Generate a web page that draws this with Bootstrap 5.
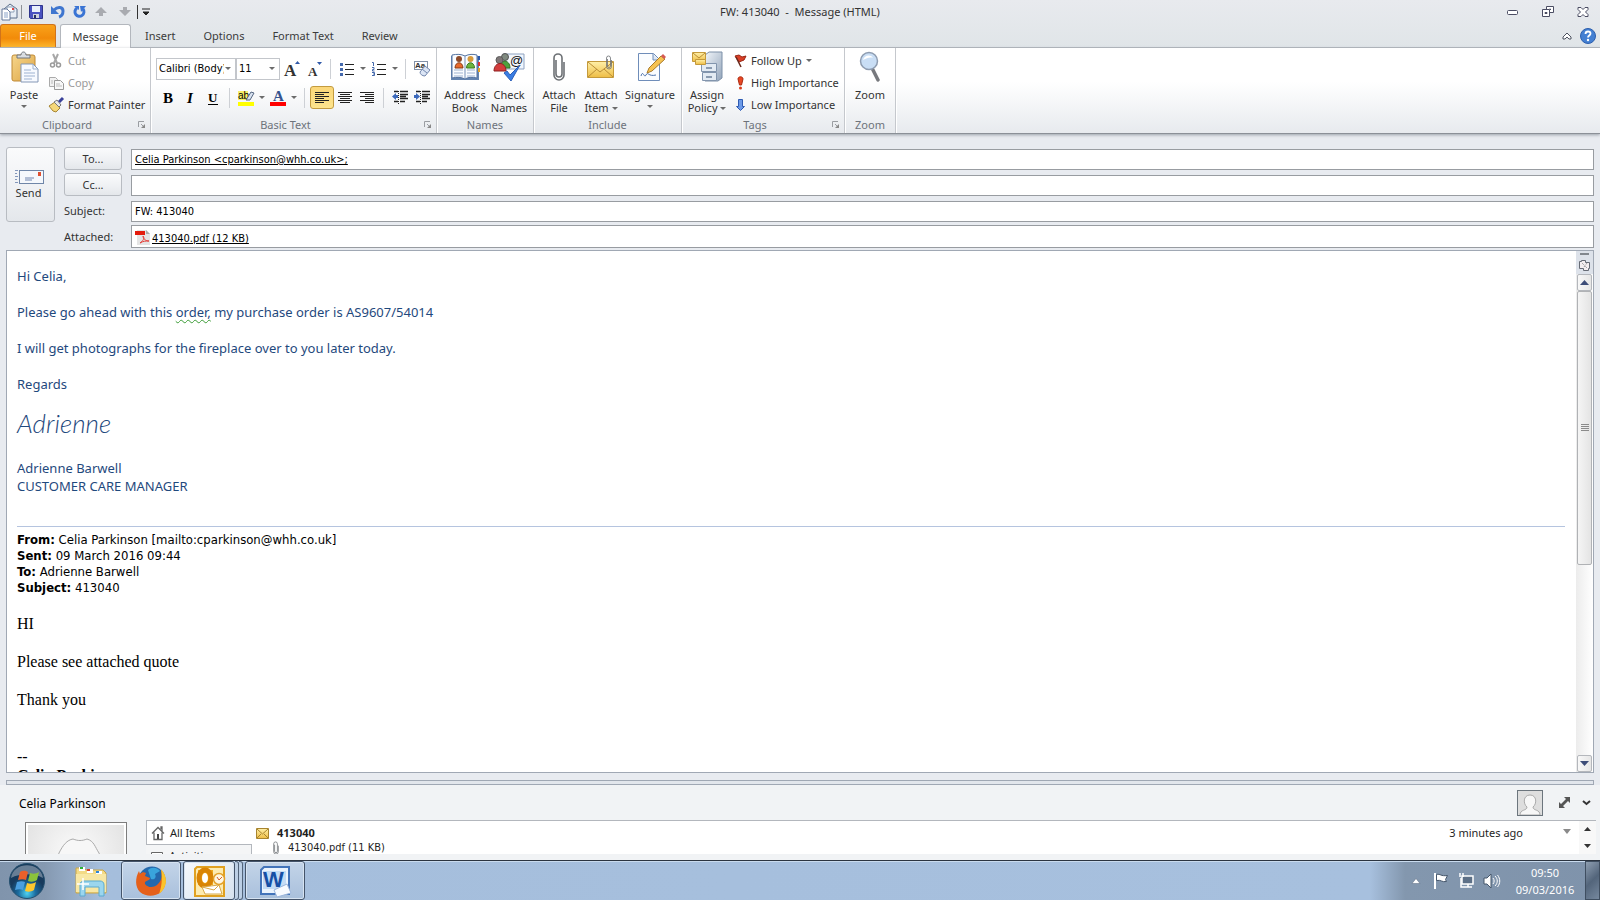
<!DOCTYPE html>
<html lang="en">
<head>
<meta charset="utf-8">
<meta name="viewport" content="width=device-width, initial-scale=1">
<title>FW: 413040 - Message (HTML)</title>
<link href="https://cdn.jsdelivr.net/npm/bootstrap@5.3.0/dist/css/bootstrap.min.css" rel="stylesheet">
<style>
:root{--ui:"Noto Sans","Open Sans",sans-serif;--tahoma:"DejaVu Sans Condensed","DejaVu Sans",sans-serif}
body{font:11px/16px var(--ui);color:#333;background:#e8ebf0}
button,input,select{font:inherit;color:inherit}
svg{display:block;flex:none;overflow:visible}
.tool{background:none;border:0;padding:0;display:flex;align-items:center;justify-content:center;flex:none}
.topbar{background:linear-gradient(#e8eaee,#e0e5e8)}
.titlebar{height:24px}
.titlebar h1{font:11px/16px var(--ui)}
.winbtns{gap:23px;padding-right:11px}
.vsep{width:1px;height:14px;background:#8c9096;flex:none;margin:0 7px 0 3px}
.vsep.dark{background:#333;margin:0 4px 0 6px}
.tabs-row{height:24px;border-bottom:1px solid #b3b7bd}
.tab-item{height:24px;line-height:22px;border:0;background:none;padding:0 14px;text-align:center;color:#3b3b3b}
.tab-file{width:56px;padding:0;color:#fff;border:1px solid #d0731b;border-bottom:0;border-radius:3px 3px 0 0;background:linear-gradient(#f9a21a,#f28b09 60%,#fdb62c);height:23px}
.tab-on{width:71px;padding:0;background:#fff;border:1px solid #b3b7bd;border-bottom:0;border-radius:3px 3px 0 0}
.ribbon{height:86px;background:linear-gradient(#fff,#fff 40%,#e7eaee);border-bottom:1px solid #8b9097;box-shadow:0 1px 3px #9aa0a8}
.rgroup{border-right:1px solid #c5c8cd;box-shadow:1px 0 #fff;flex:none}
.rbody{height:69px}
.trow{padding:9px 0 0 1px}
.trow + .trow{padding-top:6px}
.rlabel{height:16px;line-height:16px;color:#6d737b;text-align:center}
.launch{right:4px;bottom:4px}
.bigtool{flex-direction:column;justify-content:flex-start;line-height:13px;padding-top:3px;height:69px}
.bigtool svg.pic{margin-bottom:5px}
.smalltool{height:22px;justify-content:flex-start;gap:4px;white-space:nowrap}
.dim{color:#9a9a9a}
.fmt{height:22px;background:#fff;border:1px solid #c3c6cb;appearance:none;padding:0 2px;font:11px/20px var(--tahoma);color:#000;border-radius:0}
.fsep{width:1px;height:20px;background:#cdd0d5;margin:0 5px;flex:none}
.w22{width:22px;height:23px}.w10{width:10px;height:23px}.w24{width:24px;height:23px}
.picked{background:linear-gradient(#fbd779,#fde48d);border:1px solid #c39b3f;border-radius:3px}
.fields{padding:13px 6px 2px;display:grid;grid-template-columns:49px 58px 1fr;column-gap:9px;row-gap:3px;grid-auto-rows:23px}
.softbtn{border:1px solid #b8bcc2;border-radius:3px;background:linear-gradient(#fafbfc,#eef0f3 60%,#e4e7eb);padding:0}
.send{grid-row:1/4}
.entry{height:21px;border:1px solid #989ca1;background:#fff;border-radius:0;padding:0 3px;font:11px/19px var(--tahoma);color:#000;align-self:end;width:100%;outline:0}
.editor{border:1px solid #a0a8b4;margin:0 6px;background:#fff;min-height:0}
.letter{padding:16px 11px 0 10px;color:#1f497d;font:13px/18px var(--ui)}
.letter p{margin:0 0 18px}
.letter .script{font:italic 300 26px/24px Lato,cursive;margin-bottom:24px}
.gram{text-decoration:underline wavy #3a9b35 1px;text-underline-offset:2px}
.quoted{border-top:1px solid #b5c4df;padding-top:5px;font:13px/16px var(--tahoma);color:#000;margin-top:31px}
.plain{font:16px/19px "Liberation Serif",serif;color:#000}
.plain p{margin:19px 0 0}
.quoted + .plain{margin-top:-1px}
.sbar{width:17px;background:linear-gradient(90deg,#ececec,#fff)}
.sbtn{width:15px;height:17px;border:1px solid #b4b7bc;border-radius:2px;background:linear-gradient(90deg,#f8f8f8,#e6e6e6);margin:0 1px}
.thumb{flex:0 0 59%;width:15px;margin:0 1px;border:1px solid #b0b2b5;border-radius:2px;background:linear-gradient(90deg,#f5f5f5,#e4e4e4)}
.splitter{height:5px;margin:7px 6px 0;border:1px solid #a0a8b4;background:#e2e6ec}
.people{background:#f1f3f5;height:75px;color:#1e1e1e}
.pphead{height:35px;padding:0 9px 0 19px}
.ppname{font-size:12px;line-height:20px;padding-top:2px;color:#000}
.ppbody{height:34px;overflow:hidden}
.photo{width:102px;height:100px;border:1px solid #7d7d7d;padding:2px;background:#fff;margin:2px 19px 0 25px;flex:none}
.photo svg{background:radial-gradient(circle at 50% 30%,#fbfbfb,#d8d8d8)}
.sidetab{height:25px;width:106px;border:1px solid #b3b7bd;border-width:1px 0 1px 1px;background:#fff;display:flex;align-items:center;padding:0 4px;gap:5px;color:#1e1e1e}
.sidetab.off{height:21px;background:#f4f5f6;border-width:0 1px 0 0}
.feed{background:#fff;border-top:1px solid #b3b7bd;min-width:0}
.taskbar{height:40px;border-top:1px solid #2b3440;box-shadow:inset 0 1px #c9dbee;background:linear-gradient(90deg,#8094ac,#8599b1 45px,#a5bedc 100px,#a7c0de calc(100% - 230px),#8397ae calc(100% - 195px),#7f93ab)}
.explorer{width:57px}
.task{height:39px;width:60px;margin-left:2px;border:1px solid #44546a;border-radius:3px;background:linear-gradient(#c3d4e8,#a9c0dc);box-shadow:inset 0 0 0 1px #d6e3f1}
.active-task{width:52px;background:linear-gradient(135deg,#f6f9fc,#d6e2ef)}
.stack{width:4px;height:39px;border:1px solid #52647a;border-left:0;border-radius:0 3px 3px 0;background:#bccfe5}
.showdesk{width:15px;height:39px;border:1px solid #3f4e60;background:linear-gradient(135deg,#8e9eb1,#53657b 50%,#76889e)}
.clock{color:#fff;line-height:17px;text-align:center;width:64px}
</style>
</head>
<body class="vh-100 overflow-hidden d-flex flex-column">
<svg width="0" height="0" class="position-absolute">
<defs>
<symbol id="dd" viewBox="0 0 6 4"><path d="M0 0h6L3 3z" fill="#6b6b6b"/></symbol>
<symbol id="launch" viewBox="0 0 8 8"><path d="M.5 6V.5H6M3 3l3 3" fill="none" stroke="#9a9da2"/><path d="M7 3v4H3z" fill="#888"/></symbol>
<symbol id="clip" viewBox="0 0 12 30"><path d="M3 8v14a3 3 0 0 0 6 0V6a4 4 0 0 0-8 0v17a5 5 0 0 0 10 0V10" fill="none" stroke="#6d7175" stroke-width="1.6"/></symbol>
<symbol id="bust" viewBox="0 0 24 24"><path d="M2 24c0-6 7-4 7-8-4-3-4-12 3-12s7 9 3 12c0 4 7 2 7 8z" fill="#f7f7f7" stroke="#aaa"/></symbol>
<linearGradient id="gold" x2="0" y2="1"><stop stop-color="#fff0a8"/><stop offset="1" stop-color="#eebd45"/></linearGradient>
<linearGradient id="tan" x2="1" y2="1"><stop stop-color="#f6d68c"/><stop offset="1" stop-color="#dda443"/></linearGradient>
<linearGradient id="steel" x2="1" y2="1"><stop stop-color="#f2f6fa"/><stop offset="1" stop-color="#92a4ba"/></linearGradient>
<radialGradient id="orb" cy=".85"><stop stop-color="#4ed3f2"/><stop offset=".5" stop-color="#1b6b9e"/><stop offset="1" stop-color="#173a5c"/></radialGradient>
</defs>
</svg>

<header class="topbar">
<div class="titlebar d-flex align-items-center position-relative">
<svg width="18" height="18" viewBox="0 0 18 18"><path d="M4 6l6-5 7 5v9H4z" fill="#e8eef5" stroke="#5a6d88"/><path d="M7 4h7v5H7z" fill="#fff" stroke="#8fa1b8"/><path d="M12 5h2v2h-2z" fill="#d44"/><path d="M2 6h5l3 3v8H2z" fill="#fff" stroke="#64789a"/><path d="M4 10h4M4 12h4M4 14h4" stroke="#8aa3c8"/></svg>
<i class="vsep"></i>
<button class="tool" aria-label="Save"><svg width="14" height="14" viewBox="0 0 14 14"><path d="M.5.500h13v13h-12l-1-1z" fill="#4a52c0" stroke="#2f358c"/><path d="M3 1h8v6H3z" fill="#eaf0fb"/><path d="M4 9h6v4H4z" fill="#cfd3de"/><path d="M5 10h2v3H5z" fill="#26305f"/></svg></button>
<button class="tool ms-2" aria-label="Undo"><svg width="14" height="14" viewBox="0 0 14 14"><path d="M3 5c4-4 9-3 9 1 0 3-1 5-4 6" fill="none" stroke="#3f76cf" stroke-width="3"/><path d="M0 1v8h8z" fill="#3f76cf"/></svg></button>
<button class="tool ms-2" aria-label="Repeat"><svg width="14" height="14" viewBox="0 0 14 14"><path d="M4 3a4.500 4.500 0 1 0 6 1" fill="none" stroke="#3a74d4" stroke-width="3"/><path d="M7 1h6L8 7z" fill="#3a74d4"/><path d="M1 1h5v4z" fill="#3a74d4"/></svg></button>
<button class="tool ms-2" aria-label="Previous item"><svg width="12" height="10" viewBox="0 0 12 10"><path d="M6 0l6 6H8v3H4V6H0z" fill="#a9abb0"/></svg></button>
<button class="tool ms-2 ps-1" aria-label="Next item"><svg width="12" height="10" viewBox="0 0 12 10"><path d="M6 9l6-6H8V0H4v3H0z" fill="#a9abb0"/></svg></button>
<i class="vsep dark"></i>
<button class="tool" aria-label="Customise toolbar"><svg width="8" height="8" viewBox="0 0 8 8"><path d="M0 1h8M1 4h6L4 7z" stroke="#222" fill="#222"/></svg></button>
<h1 class="position-absolute start-0 end-0 text-center m-0 pe-none">FW: 413040&nbsp; -&nbsp; Message (HTML)</h1>
<div class="winbtns ms-auto d-flex align-items-center">
<button class="tool" aria-label="Minimise"><svg width="12" height="12" viewBox="0 0 12 12"><rect x=".5" y="4.500" width="10" height="4" rx="1" fill="#fff" stroke="#4b4d63"/></svg></button>
<button class="tool" aria-label="Restore"><svg width="12" height="12" viewBox="0 0 12 12"><path d="M4.500.500h7v6h-7z" fill="#fff" stroke="#4b4d63"/><path d="M.5 3.500h7v7h-7z" fill="#fff" stroke="#4b4d63"/><path d="M3 6.500h2v1H3zM7.500 3h1v1" fill="none" stroke="#4b4d63"/></svg></button>
<button class="tool" aria-label="Close"><svg width="12" height="12" viewBox="0 0 12 12"><path d="M1 1.500h3l2 2 2-2h3v2L8.500 6 11 8.500v2H8l-2-2-2 2H1v-2L3.500 6 1 3.500z" fill="#fff" stroke="#4b4d63"/></svg></button>
</div>
</div>
<nav class="tabs-row d-flex" aria-label="Ribbon tabs">
<button class="tab-item tab-file">File</button>
<button class="tab-item tab-on ms-1">Message</button>
<button class="tab-item">Insert</button>
<button class="tab-item">Options</button>
<button class="tab-item">Format Text</button>
<button class="tab-item">Review</button>
<div class="ms-auto d-flex align-items-center gap-2 pe-1">
<button class="tool" aria-label="Collapse ribbon"><svg width="10" height="8" viewBox="0 0 10 8"><path d="M1 5l4-4 4 4v2H7L5 5 3 7H1z" fill="#fff" stroke="#4d5260"/></svg></button>
<button class="tool" aria-label="Help"><svg width="16" height="16" viewBox="0 0 16 16"><circle cx="8" cy="8" r="7.500" fill="#4480d2" stroke="#2c5fae"/><path d="M5.500 6c0-3.500 5-3 5-.5C10.500 7.500 8 7.500 8 9.500" fill="none" stroke="#fff" stroke-width="1.800"/><circle cx="8" cy="12" r="1.200" fill="#fff"/></svg></button>
</div>
</nav>
</header>

<section class="ribbon d-flex flex-shrink-0" aria-label="Ribbon">
<div class="rgroup position-relative" style="width:151px">
<div class="rbody d-flex">
<button class="tool bigtool" style="width:48px"><svg class="pic" width="30" height="32" viewBox="0 0 30 32"><rect x="3" y="4" width="23" height="26" rx="2" fill="url(#tan)" stroke="#c08a36"/><path d="M8 7V4h4c0-4 5-4 5 0h4v3z" fill="#d9dde2" stroke="#6f757d"/><path d="M12 13h12l5 5v13H12z" fill="#f7faff" stroke="#8397b5"/><path d="M24 13v5h5M15 19h7M15 22h11M15 25h11M15 28h8" fill="none" stroke="#9db2d1"/></svg>Paste<svg class="mt-1" width="6" height="4"><use href="#dd"/></svg></button>
<div>
<button class="tool smalltool dim pt-1"><svg width="16" height="16" viewBox="0 0 16 16"><path d="M5 1l4 9M10 1L6 10" stroke="#a8a8a8" stroke-width="2"/><circle cx="4.500" cy="12" r="2" fill="none" stroke="#999" stroke-width="1.500"/><circle cx="10.500" cy="12" r="2" fill="none" stroke="#999" stroke-width="1.500"/></svg>Cut</button>
<button class="tool smalltool dim pt-1"><svg width="16" height="16" viewBox="0 0 16 16"><path d="M1.500 2.500h6l2 2v7h-8z" fill="#f2f2f2" stroke="#aaa"/><path d="M6.500 5.500h6l3 3v6h-9z" fill="#f8f8f8" stroke="#999"/><path d="M8 9h4M8 11h6M3 6h2M3 8h2" stroke="#bbb"/></svg>Copy</button>
<button class="tool smalltool pt-1"><svg width="16" height="16" viewBox="0 0 16 16"><path d="M1 9l6-4 5 6-4 4-3-1z" fill="#f5d779" stroke="#a78634"/><path d="M6 5l3-2 4 5-2 2z" fill="#e8e8e8" stroke="#777"/><path d="M11 5l4-4" stroke="#39409a" stroke-width="3"/></svg>Format Painter</button>
</div>
</div>
<div class="rlabel pe-3">Clipboard</div>
<button class="tool launch position-absolute" aria-label="Clipboard options"><svg width="8" height="8"><use href="#launch"/></svg></button>
</div>

<div class="rgroup position-relative" style="width:286px">
<div class="rbody px-1">
<div class="trow d-flex align-items-center">
<div class="position-relative d-flex"><select class="fmt" style="width:80px" aria-label="Font"><option>Calibri (Body)</option></select><span class="position-absolute end-0 top-0 bg-white pe-none d-flex align-items-center justify-content-center mt-1 me-1" style="width:8px;height:14px"><svg width="6" height="4"><use href="#dd"/></svg></span></div>
<div class="position-relative d-flex"><select class="fmt" style="width:44px" aria-label="Font size"><option>11</option></select><span class="position-absolute end-0 top-0 pe-none d-flex align-items-center justify-content-center mt-1 me-1" style="width:8px;height:14px"><svg width="6" height="4"><use href="#dd"/></svg></span></div>
<button class="tool w24" aria-label="Grow font"><svg width="16" height="16" viewBox="0 0 16 16"><text x="0" y="15" font-family="Liberation Serif" font-weight="bold" font-size="17" fill="#333">A</text><path d="M11 3l2.500-3L16 3z" fill="#2f58a8"/></svg></button>
<button class="tool w22" aria-label="Shrink font"><svg width="16" height="16" viewBox="0 0 16 16"><text x="1" y="15" font-family="Liberation Serif" font-weight="bold" font-size="13" fill="#333">A</text><path d="M10 1l2.500 3L15 1z" fill="#2f58a8"/></svg></button>
<i class="fsep ms-1"></i>
<button class="tool w22" aria-label="Bullets"><svg width="15" height="14" viewBox="0 0 15 14"><path d="M5 2.500h9M5 7.500h9M5 12.500h9" stroke="#222"/><path d="M0 1h3v3H0zM0 6h3v3H0zM0 11h3v3H0z" fill="#4469ad"/></svg></button>
<button class="tool w10" aria-label="Bullet styles"><svg width="6" height="4"><use href="#dd"/></svg></button>
<button class="tool w22" aria-label="Numbering"><svg width="15" height="14" viewBox="0 0 15 14"><path d="M5 2.500h9M5 7.500h9M5 12.500h9" stroke="#222"/><path d="M0 .5h1.500V4M0 5.500h2v2H.5V9h2M0 10.500h2.500v3H0M1 12h1" fill="none" stroke="#4469ad"/></svg></button>
<button class="tool w10" aria-label="Numbering styles"><svg width="6" height="4"><use href="#dd"/></svg></button>
<i class="fsep"></i>
<button class="tool w22" aria-label="Clear formatting"><svg width="17" height="17" viewBox="0 0 17 17"><rect x=".5" y="1.500" width="13" height="8" fill="#fff" stroke="#8291a8"/><text x="1" y="8" font-family="Liberation Sans" font-weight="bold" font-size="8" fill="#333">Aa</text><path d="M6 12l5-6 5 4-5 6c-3 0-5-2-5-4z" fill="#dbe5f5" stroke="#7387ad"/><path d="M8 9l5 4" stroke="#7387ad"/></svg></button>
</div>
<div class="trow d-flex align-items-center">
<button class="tool w24" aria-label="Bold"><svg width="12" height="14" viewBox="0 0 12 14"><text x="1" y="12" font-family="Liberation Serif" font-weight="bold" font-size="15">B</text></svg></button>
<button class="tool w22" aria-label="Italic"><svg width="12" height="14" viewBox="0 0 12 14"><text x="2" y="12" font-family="Liberation Serif" font-weight="bold" font-style="italic" font-size="15">I</text></svg></button>
<button class="tool w22" aria-label="Underline"><svg width="12" height="14" viewBox="0 0 12 14"><text x="1" y="11" font-family="Liberation Serif" font-weight="bold" font-size="13">U</text><path d="M1 13.500h10" stroke="#000"/></svg></button>
<i class="fsep"></i>
<button class="tool w22" aria-label="Highlight"><svg width="17" height="16" viewBox="0 0 17 16"><path d="M0 1h10v9H0z" fill="#f6ef6a"/><text x="0" y="9" font-family="Liberation Sans" font-size="10">ab</text><path d="M8 10l5-8 3 1-4 7z" fill="#d8e2f1" stroke="#566781"/><path d="M0 12h16v4H0z" fill="#ff0"/></svg></button>
<button class="tool w10" aria-label="Highlight colours"><svg width="6" height="4"><use href="#dd"/></svg></button>
<button class="tool w22" aria-label="Font colour"><svg width="17" height="16" viewBox="0 0 17 16"><text x="3" y="11" font-family="Liberation Serif" font-weight="bold" font-size="15" fill="#34538e">A</text><path d="M0 12h16v4H0z" fill="#f00"/></svg></button>
<button class="tool w10" aria-label="Font colours"><svg width="6" height="4"><use href="#dd"/></svg></button>
<i class="fsep"></i>
<button class="tool w24 picked" aria-label="Align left"><svg width="14" height="12" viewBox="0 0 14 12"><path d="M0 .5h14M0 2.500h9M0 4.500h14M0 6.500h9M0 8.500h14M0 10.500h9" stroke="#222"/></svg></button>
<button class="tool w22" aria-label="Centre"><svg width="14" height="12" viewBox="0 0 14 12"><path d="M0 .5h14M2 2.500h10M0 4.500h14M2 6.500h10M0 8.500h14M2 10.500h10" stroke="#222"/></svg></button>
<button class="tool w22" aria-label="Align right"><svg width="14" height="12" viewBox="0 0 14 12"><path d="M0 .5h14M5 2.500h9M0 4.500h14M5 6.500h9M0 8.500h14M5 10.500h9" stroke="#222"/></svg></button>
<i class="fsep"></i>
<button class="tool w22" aria-label="Decrease indent"><svg width="16" height="13" viewBox="0 0 16 13"><path d="M2 .5h4M8 .5h8M8 3.500h8M8 5.500h6M8 7.500h8M2 10.500h4M8 10.500h5" stroke="#222" stroke-width="1.500"/><path d="M6.500 0v13" stroke="#222" stroke-dasharray="1 1"/><path d="M0 5.500L4 2v2h2v3H4v2z" fill="#3c69bc"/></svg></button>
<button class="tool w22" aria-label="Increase indent"><svg width="16" height="13" viewBox="0 0 16 13"><path d="M2 .5h4M8 .5h8M8 3.500h8M8 5.500h6M8 7.500h8M2 10.500h4M8 10.500h5" stroke="#222" stroke-width="1.500"/><path d="M6.500 0v13" stroke="#222" stroke-dasharray="1 1"/><path d="M6 5.500L2 2v2H0v3h2v2z" fill="#3c69bc"/></svg></button>
</div>
</div>
<div class="rlabel pe-3">Basic Text</div>
<button class="tool launch position-absolute" aria-label="Text options"><svg width="8" height="8"><use href="#launch"/></svg></button>
</div>

<div class="rgroup" style="width:97px">
<div class="rbody d-flex ps-1">
<button class="tool bigtool" style="width:48px"><svg class="pic" width="32" height="32" viewBox="0 0 32 32"><path d="M2 5h28v24H2z" fill="#6484b0"/><path d="M3 4c5-1 9-1 13 1 4-2 8-2 12-1v23c-5-1-9-1-12 1-4-2-8-2-13-1z" fill="#fafcff" stroke="#5473a0"/><path d="M16 5v23" stroke="#7691b8"/><path d="M5 19h9M5 22h9M5 25h9M18 19h8M18 22h8M18 25h8" stroke="#9fb3d0"/><circle cx="10" cy="8" r="3" fill="#8c4a2a"/><path d="M6 17c0-7 8-7 8 0z" fill="#e86a2c" stroke="#873b16"/><circle cx="21.500" cy="8" r="3" fill="#d79a3b"/><path d="M17.500 17c0-7 8-7 8 0z" fill="#6cb53d" stroke="#3b7a20"/><path d="M29 5h2v4h-2z" fill="#2857ae"/><path d="M29 11h2v4h-2z" fill="#d33"/><path d="M29 17h2v4h-2z" fill="#e5a323"/></svg><span>Address<br>Book</span></button>
<button class="tool bigtool" style="width:40px"><svg class="pic" width="32" height="32" viewBox="0 0 32 32"><path d="M10 3h21v15H10z" fill="#f1f6fd" stroke="#8fa3c0"/><circle cx="12" cy="6" r="3.500" fill="#7f8a80" stroke="#555"/><path d="M7 17c0-9 10-9 10 0z" fill="#4da13e" stroke="#2f7226"/><circle cx="6.500" cy="9" r="3.500" fill="#7e7777" stroke="#5b5b5b"/><path d="M1 20c0-10 12-10 12 0z" fill="#d33c3c" stroke="#8e2020"/><text x="17" y="14" font-family="Liberation Sans" font-size="13" fill="#111">@</text><path d="M11 22l3-2 3 4 10-10-9 16z" fill="#3a7ee4" stroke="#2c5fb8"/></svg><span>Check<br>Names</span></button>
</div>
<div class="rlabel">Names</div>
</div>

<div class="rgroup" style="width:148px">
<div class="rbody d-flex ps-1">
<button class="tool bigtool" style="width:42px"><svg class="pic" width="32" height="32" viewBox="0 0 32 32"><use href="#clip" x="10" y="1" width="12" height="30"/></svg><span>Attach<br>File</span></button>
<button class="tool bigtool" style="width:42px"><svg class="pic" width="32" height="32" viewBox="0 0 32 32"><path d="M2.500 10.500h26v16h-26z" fill="url(#gold)" stroke="#c49a3c"/><path d="M3 11l12 10 13-10M3 26l9-8M28 26l-9-8" fill="none" stroke="#b98d36"/><use href="#clip" x="20" y="4" width="8" height="15"/></svg><span>Attach<br>Item <svg class="d-inline-block align-middle" width="6" height="4"><use href="#dd"/></svg></span></button>
<button class="tool bigtool" style="width:56px"><svg class="pic" width="32" height="32" viewBox="0 0 32 32"><path d="M4.500 2.500h15l6 6v21h-21z" fill="#fbfdff" stroke="#6f8db9"/><path d="M19 3v6h6" fill="#dce7f5" stroke="#6f8db9"/><path d="M7 25c2-7 3 3 5-1s2 2 10 0" fill="none" stroke="#4e73ac"/><path d="M13 22l2-5L27 5l4 3-13 12z" fill="#f6c352" stroke="#a97b2b"/><path d="M27 5l2-2 3 3-2 2z" fill="#d65a55"/></svg>Signature<svg class="mt-1" width="6" height="4"><use href="#dd"/></svg></button>
</div>
<div class="rlabel">Include</div>
</div>

<div class="rgroup position-relative" style="width:163px">
<div class="rbody d-flex">
<button class="tool bigtool" style="width:50px"><svg class="pic" width="32" height="32" viewBox="0 0 32 32"><path d="M14 4l4-3h13v26l-4 3H14z" fill="url(#steel)" stroke="#7d90a8"/><path d="M10.500 12.500h15v8h-15zM11.500 21.500h14v8h-14z" fill="#e3ebf3" stroke="#8295ad"/><path d="M15 16h6v2h-6zM15 25h6v2h-6z" fill="#8a9bb0"/><path d="M1.500 1.500h13v9h-13z" fill="url(#gold)" stroke="#c49a3c"/><path d="M2 2l6 5 6-5" fill="none" stroke="#b98d36"/><path d="M4.500 8.500h10v5h-10z" fill="url(#gold)" stroke="#c49a3c"/></svg><span>Assign<br>Policy <svg class="d-inline-block align-middle" width="6" height="4"><use href="#dd"/></svg></span></button>
<div>
<button class="tool smalltool pt-1"><svg width="15" height="14" viewBox="-3 0 15 14"><path d="M0 2l4-1 3 2 4-1-2 4-5 2z" fill="#d93f27" stroke="#9a2613"/><path d="M1 3l5 10" stroke="#6b2a1d" stroke-width="1.500"/></svg>Follow Up <svg width="6" height="4"><use href="#dd"/></svg></button>
<button class="tool smalltool pt-1"><svg width="15" height="14" viewBox="-3 0 15 14"><path d="M3 3c0-3 5-3 5 0L6.500 9h-2z" fill="#e94724" stroke="#a92b10"/><circle cx="5.500" cy="12" r="1.500" fill="#d93c1c"/></svg>High Importance</button>
<button class="tool smalltool pt-1"><svg width="15" height="14" viewBox="-3 0 15 14"><path d="M3.500 1.500h4v7h2l-4 4-4-4h2z" fill="#6c9ae8" stroke="#2e5bb3"/></svg>Low Importance</button>
</div>
</div>
<div class="rlabel pe-3">Tags</div>
<button class="tool launch position-absolute" aria-label="Tag options"><svg width="8" height="8"><use href="#launch"/></svg></button>
</div>
<div class="rgroup" style="width:51px">
<div class="rbody"><button class="tool bigtool w-100"><svg class="pic" width="32" height="32" viewBox="0 0 32 32"><path d="M18 17l6 12" stroke="#77797d" stroke-width="3.500" stroke-linecap="round"/><circle cx="15" cy="10" r="8.500" fill="#c9def5" stroke="#8e9cb0" stroke-width="1.500"/><path d="M9 9c1-5 8-6 10-2-3-1-6 0-10 2z" fill="#fff"/></svg>Zoom</button></div>
<div class="rlabel">Zoom</div>
</div>
</section>

<form class="fields flex-shrink-0" onsubmit="return false">
<button class="softbtn send d-flex flex-column align-items-center justify-content-center"><svg class="me-1" width="30" height="16" viewBox="0 0 30 16"><path d="M1 1.500h3M1 4.500h2M1 7.500h3M1 10.500h2M1 13.500h3" stroke="#8397bb"/><rect x="5.500" y="1.500" width="24" height="13" fill="#f5f8fc" stroke="#6f86a8"/><path d="M11 9h9M11 11h7" stroke="#7186b0"/><path d="M24 3h3v4h-3z" fill="#e05030"/></svg><span class="pe-1">Send</span></button>
<button class="softbtn">To...</button><input class="entry text-decoration-underline" aria-label="To" value="Celia Parkinson &lt;cparkinson@whh.co.uk&gt;;">
<button class="softbtn">Cc...</button><input class="entry" aria-label="Cc">
<label for="subj" class="align-self-center">Subject:</label><input id="subj" class="entry" value="FW: 413040">
<span></span><span class="align-self-center">Attached:</span>
<div class="entry d-flex align-items-center h-auto align-self-stretch"><svg width="17" height="16" viewBox="0 0 17 16"><path d="M2 1h9l4 4v11H2z" fill="#e4e4e4"/><path d="M11 1l4 4h-4z" fill="#aaa"/><path d="M0 2h10v4H0z" fill="#e31b0c"/><path d="M5 14c3-2 5-5 3-7 0 3 3 5 6 5-3 0-6 0-9 2z" fill="none" stroke="#e5403a"/></svg><a href="#" class="text-black pt-1">413040.pdf (12 KB)</a></div>
</form>

<main class="editor flex-grow-1 d-flex">
<article class="letter flex-grow-1 overflow-hidden" aria-label="Message body">
<p>Hi Celia,</p>
<p>Please go ahead with this <span class="gram">order,</span> my purchase order is AS9607/54014</p>
<p>I will get photographs for the fireplace over to you later today.</p>
<p>Regards</p>
<p class="script">Adrienne</p>
<div>Adrienne Barwell<br>CUSTOMER CARE MANAGER</div>
<div class="quoted"><b>From:</b> Celia Parkinson [mailto:cparkinson@whh.co.uk]<br><b>Sent:</b> 09 March 2016 09:44<br><b>To:</b> Adrienne Barwell<br><b>Subject:</b> 413040</div>
<div class="plain"><p>HI</p><p>Please see attached quote</p><p>Thank you</p><br><p>--<br><b>Celia Parkinson</b></p></div>
</article>
<div class="sbar d-flex flex-column flex-shrink-0">
<button class="tool flex-column" style="height:23px;background:#dde2ea" aria-label="Select browse object"><svg width="13" height="19" viewBox="0 0 13 19"><path d="M2 0h9v2H2z" fill="#82878e"/><path d="M1.500 8.500v7h4v2h5v-2h1v-6h-4v-2h-4v1z" fill="#f4eef0" stroke="#666b75"/><path d="M4 10l5 5M9 10l-3 4" stroke="#888" stroke-dasharray="1 1"/></svg></button>
<button class="tool sbtn" aria-label="Scroll up"><svg width="9" height="5" viewBox="0 0 9 5"><path d="M4.500 0L9 5H0z" fill="#3d4d78"/></svg></button>
<div class="flex-grow-1 d-flex flex-column"><div class="thumb d-flex align-items-center justify-content-center"><svg width="8" height="8" viewBox="0 0 8 8"><path d="M0 .5h8M0 2.500h8M0 4.500h8M0 6.500h8" stroke="#8b8b8b"/></svg></div></div>
<button class="tool sbtn" aria-label="Scroll down"><svg width="9" height="5" viewBox="0 0 9 5"><path d="M4.500 5L0 0h9z" fill="#3d4d78"/></svg></button>
</div>
</main>

<section class="flex-shrink-0" aria-label="People pane">
<div class="splitter"></div>
<div class="people">
<div class="pphead d-flex align-items-center">
<span class="ppname">Celia Parkinson</span>
<span class="ms-auto border border-secondary bg-light"><svg width="24" height="24" style="background:#dedede"><use href="#bust"/></svg></span>
<button class="tool ms-3" aria-label="Expand"><svg width="11" height="11" viewBox="0 0 11 11"><path d="M5 0h6v6L9 4 4 9l2 2H0V5l2 2 5-5z" fill="#555"/></svg></button>
<button class="tool ms-2 ps-1" aria-label="Collapse"><svg width="9" height="6" viewBox="0 0 9 6"><path d="M1 1l3.500 3L8 1" fill="none" stroke="#333" stroke-width="2"/></svg></button>
</div>
<div class="ppbody d-flex">
<div class="photo"><svg width="96" height="94" viewBox="0 0 96 94"><path d="M26 50c0-12 3-16 5-22 4-8 8-13 14-14 5 2 9 2 14 0 7 2 8 8 12 14 3 6 4 14 4 22z" fill="#f7f7f7" stroke="#aaa"/></svg></div>
<div><button class="sidetab"><svg width="14" height="14" viewBox="0 0 14 14"><path d="M1 7.500L7 1.500l6 6M3 6.500v7h8v-7M10 3V1h1v4" fill="none" stroke="#666" stroke-width="1.300"/><path d="M6 8h2v5H6z" fill="#444"/></svg>All Items</button>
<button class="sidetab off"><svg width="14" height="14" viewBox="0 0 14 14"><path d="M1.500 3.500h11v10h-11z" fill="#fff" stroke="#666"/></svg>Activities</button></div>
<div class="feed flex-grow-1 d-flex justify-content-between ps-1">
<div><div class="d-flex align-items-center pt-1 gap-2"><svg width="13" height="11" viewBox="0 0 13 11"><path d="M.5.500h12v10H.5z" fill="url(#gold)" stroke="#a8842e"/><path d="M1 1l5.500 5L12 1M1 10l4-4M12 10L8 6" fill="none" stroke="#a8842e"/></svg><b>413040</b></div>
<div class="d-flex align-items-center ps-3 gap-2" style="font:11px/14px var(--tahoma)"><svg width="8" height="14"><use href="#clip"/></svg>413040.pdf (11 KB)</div></div>
<div class="d-flex gap-4 pe-2"><span class="pt-1 pe-3">3 minutes ago</span><svg class="mt-2" width="8" height="5" viewBox="0 0 8 5"><path d="M0 0h8L4 5z" fill="#8a8a8a"/></svg></div>
</div>
<div class="feed d-flex flex-column justify-content-around align-items-center me-1" style="width:17px;background:#f8f8f8"><svg width="7" height="4" viewBox="0 0 7 4"><path d="M0 4h7L3.500 0z" fill="#333"/></svg><svg width="7" height="4" viewBox="0 0 7 4"><path d="M0 0h7L3.500 4z" fill="#333"/></svg></div>
</div>
</div>
</section>

<footer class="taskbar d-flex align-items-center flex-shrink-0">
<button class="tool ms-2" aria-label="Start"><svg width="38" height="38" viewBox="0 0 38 38"><circle cx="19" cy="19" r="17.500" fill="url(#orb)" stroke="#24506f"/><path d="M3 16C5-1 33-1 35 16c-9-5-23-5-32 0z" fill="#fff" opacity=".35"/><path d="M12 10c3-2 6-1 8 0l-2 8c-2-1-5-1-8 0z" fill="#e9602b"/><path d="M22 11c3 1 6 1 9-1l-2 8c-3 2-6 2-9 1z" fill="#8bc33b"/><path d="M9 20c3-1 6-1 8 0l-2 8c-2-1-5-1-8 0z" fill="#4a9fe0"/><path d="M19 21c3 1 6 1 9-1l-2 8c-3 2-6 2-9 1z" fill="#fdc82f"/></svg></button>
<button class="tool explorer ms-3" aria-label="Explorer"><svg width="34" height="32" viewBox="0 0 34 32"><path d="M2 28V3h8l2 2h17l3 3v20z" fill="#f3da86" stroke="#c9a648"/><path d="M5 2h6v4H5zM13 4h6v4h-6zM22 6h6v4h-6z" fill="#fff"/><path d="M6 2h3v2H6z" fill="#2eb135"/><path d="M13 4h3v2h-3z" fill="#d8422b"/><path d="M22 6h3v2h-3z" fill="#2f86d6"/><path d="M2 9h30v18H2z" fill="#f8e7a4"/><path d="M6 31V20c0-3 2-4 4-4h16c2 0 4 1 4 4v11h-5v-9H11v9z" fill="#9bd6ee" stroke="#5baad0"/><path d="M9 13v12M3 19h12" stroke="#fff" stroke-width="1.500"/></svg></button>
<button class="tool task" aria-label="Firefox"><svg width="32" height="32" viewBox="0 0 32 32"><circle cx="17" cy="15" r="13.500" fill="#2468ac"/><path d="M13 5c4-4 10-2 12 1l-5 3c2 4-1 6-4 5z" fill="#39a4dc"/><path d="M26 5c6 6 6 16 0 22-6 5-15 5-21 0C0 22 0 13 4 6l1 3c2-2 4-2 6-1l-1 3 5 2c0 3-6 2-5 6 4 5 10 3 13 0 4-4 4-8 3-14z" fill="#e4601b"/><path d="M26 4c7 8 7 18-2 25 2-5 4-14 2-25z" fill="#fbc32b"/></svg></button>
<button class="tool task active-task" aria-label="Outlook"><svg width="32" height="32" viewBox="0 0 32 32"><path d="M4 2h27v29H2V4z" fill="#fdebb0" stroke="#e0a121" stroke-width="2"/><path d="M5 5h15v15H5z" fill="#f0a91c"/><ellipse cx="12" cy="13" rx="6" ry="8" fill="none" stroke="#d98405" stroke-width="5"/><ellipse cx="12" cy="13" rx="3" ry="5" fill="#fff"/><path d="M9 22l17-2 3 9H12z" fill="#fff" stroke="#d9a949"/><path d="M9 22l12 3 5-5" fill="none" stroke="#d9a949"/><circle cx="26" cy="14" r="5.500" fill="#fff7e2" stroke="#e3a12b" stroke-width="1.500"/><path d="M24 12l2 3 3-3" fill="none" stroke="#d2622b"/></svg></button><i class="stack"></i><i class="stack"></i>
<button class="tool task" aria-label="Word"><svg width="32" height="32" viewBox="0 0 32 32"><path d="M5 2h25v27H2V5z" fill="#eaf3fd" stroke="#4273b9" stroke-width="2"/><path d="M4 6h23v18H4z" fill="#c3dbf5"/><text x="4" y="22" font-family="Liberation Sans" font-weight="bold" font-size="22" fill="#164fa5">W</text><path d="M15 25l13-6 4 9-14 4z" fill="#f8fbff" stroke="#9cb6dc"/></svg></button>
<div class="ms-auto d-flex align-items-center gap-2">
<button class="tool me-1" aria-label="Hidden icons"><svg width="10" height="6" viewBox="0 0 10 6"><path d="M5 .5L9 5.500H1z" fill="#fff" stroke="#56677c" stroke-width=".5"/></svg></button>
<svg width="16" height="18" viewBox="0 0 16 18"><path d="M2 1v16" stroke="#fff" stroke-width="2"/><path d="M3.500 2.500c4-1 4 2 11 1l-2 4 1 2c-5 1-5-2-10-1z" fill="#fff" stroke="#45566b"/></svg>
<svg width="18" height="18" viewBox="0 0 18 18"><path d="M5 4h11v8H5z" fill="#5d7087" stroke="#fff" stroke-width="1.500"/><path d="M7 15h8M11 12v3M3 1v4M6 1v4M4 6v9h3" stroke="#fff" stroke-width="1.500" fill="none"/></svg>
<svg width="18" height="18" viewBox="0 0 18 18"><path d="M1 6h3l4-4v14l-4-4H1z" fill="#fff" stroke="#45566b"/><path d="M10 6c1.500 2 1.500 4 0 6M12 4c3 3 3 7 0 10M14.500 3c3 4 3 8 0 12" fill="none" stroke="#fff"/></svg>
<div class="clock ms-1">09:50<br>09/03/2016</div>
<button class="tool showdesk" aria-label="Show desktop"></button>
</div>
</footer>
<script src="https://cdn.jsdelivr.net/npm/bootstrap@5.3.0/dist/js/bootstrap.bundle.min.js"></script>
</body>
</html>
